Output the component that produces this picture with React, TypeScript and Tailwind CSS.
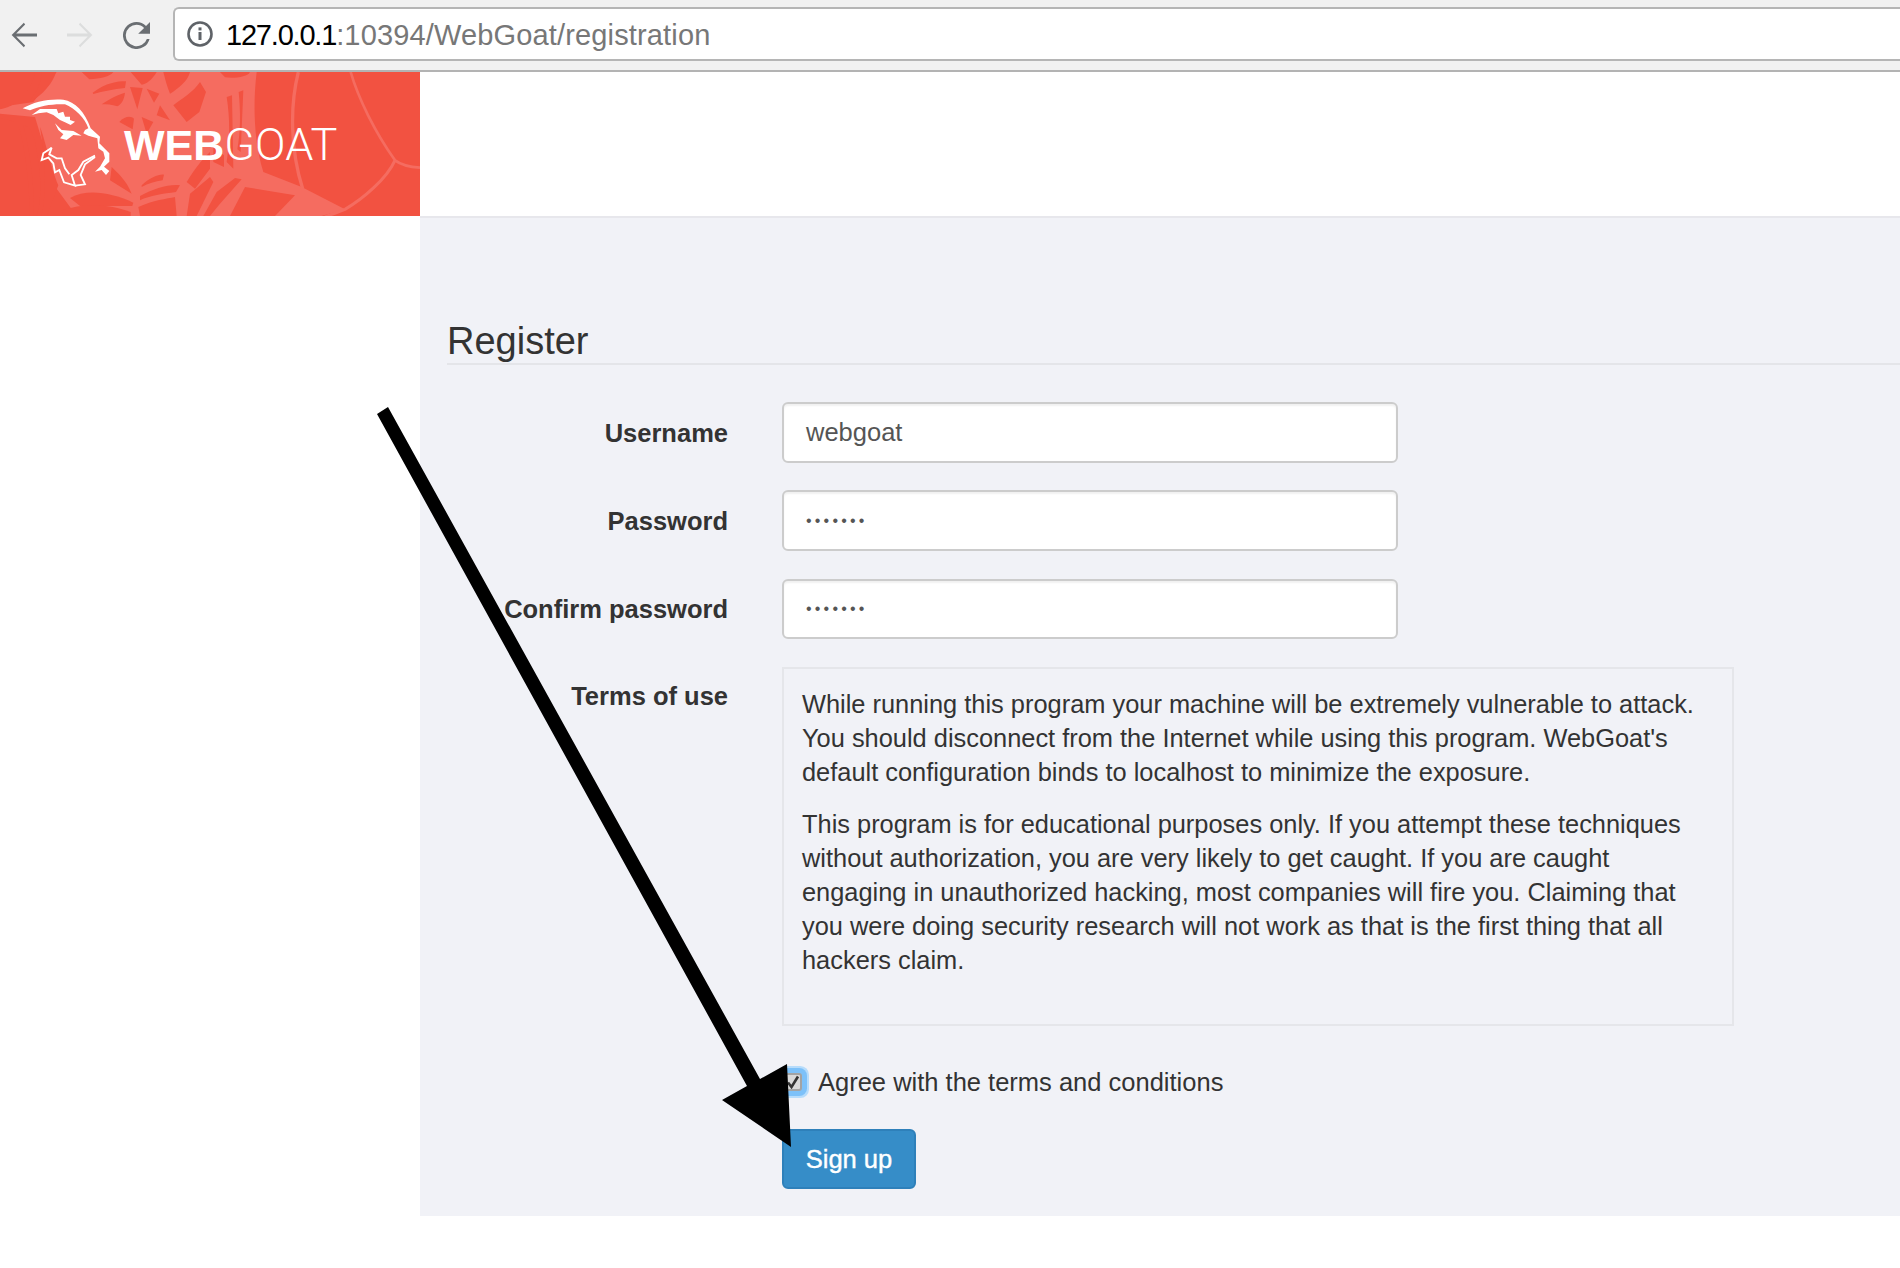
import React from "react";

function Back({ color }: { color: string }) {
  return (
    <svg width="26" height="26" viewBox="4 4 16 16" className="shrink-0" fill={color}>
      <path d="M20 11.1H7.2l5.5-5.6L11.9 4.4 4.4 12l7.5 7.6.8-1.1-5.5-5.6H20z" />
    </svg>
  );
}

function Forward({ color }: { color: string }) {
  return (
    <svg width="26" height="26" viewBox="4 4 16 16" className="shrink-0" fill={color}>
      <path d="M4 11.1h12.8l-5.5-5.6.8-1.1 7.5 7.6-7.5 7.6-.8-1.1 5.5-5.6H4z" />
    </svg>
  );
}

function Reload() {
  return (
    <svg width="27" height="27" viewBox="4 4 16 16" className="shrink-0" fill="#6a6e72">
      <path d="M17.65 6.35A7.95 7.95 0 0 0 12 4a8 8 0 1 0 7.73 10h-1.6A6.4 6.4 0 1 1 12 5.6c1.8 0 3.3.7 4.5 1.9L13 11h7V4l-2.35 2.35z" />
    </svg>
  );
}

function Info() {
  return (
    <svg width="26" height="26" viewBox="0 0 26 26" className="shrink-0" fill="none">
      <circle cx="13" cy="13" r="11.5" stroke="#5f6368" strokeWidth="2.6" />
      <rect x="11.5" y="11" width="3" height="8" fill="#5f6368" />
      <rect x="11.5" y="6.4" width="3" height="3" fill="#5f6368" />
    </svg>
  );
}

function Web() {
  const red = "#f25241";
  return (
    <svg width="420" height="144" viewBox="0 0 1260 432" className="absolute inset-0">
      <rect width="1260" height="432" fill={red} />
      <path fill="#f56c60" d="M170 0H770C758 100 762 210 790 300L905 345 1035 412 965 432H230L170 350 105 135 0 125V105L100 90Z" />
      <g fill={red}>
        <path d="M0 0H105C100 40 70 80 35 100 20 108 10 110 0 112Z" />
        <path d="M125 0H168C160 30 130 70 85 92 110 60 125 30 125 0Z" />
        <path d="M245 0H340C330 14 300 20 268 22Z" />
        <path d="M278 62C320 32 350 28 378 28L375 48C340 52 310 58 280 66Z" />
        <path d="M305 97C335 76 355 68 375 62 372 85 365 95 352 103 335 98 320 97 305 97Z" />
        <path d="M392 0H470C455 25 440 35 425 38Z" />
        <path d="M390 45L428 48 412 112Z" />
        <path d="M440 50L478 65 462 92Z" />
        <path d="M480 100L510 145 470 130Z" />
        <path d="M358 150C375 130 395 132 402 140L398 172Z" />
        <path d="M425 135L460 150 440 185Z" />
        <path d="M490 0H570C565 25 535 50 510 65 500 40 495 20 490 0Z" />
        <path d="M520 100C545 80 580 60 600 30L618 60 598 120 560 150Z" />
        <path d="M660 0H750C745 15 700 20 675 16Z" />
        <path d="M680 75L696 70 700 290 680 270C690 200 690 140 680 75Z" />
        <path d="M716 60L730 55 722 240 712 232C722 180 722 120 716 60Z" />
        <path d="M0 140C30 140 50 150 60 175 75 240 90 340 88 432H0Z" />
        <path d="M70 160C90 165 95 175 105 210 120 280 130 370 110 432H100C105 340 90 240 70 160Z" />
        <path d="M120 165C135 200 150 280 175 340L140 432H125C140 360 135 260 120 165Z" />
        <path d="M335 285C350 300 380 325 395 365L330 325Z" />
        <path d="M210 378C260 350 330 360 400 392L397 402H240Z" />
        <path d="M185 415C250 392 330 395 392 420V432H190Z" />
        <path d="M425 340C450 315 480 305 492 308L488 325C465 328 445 335 425 345Z" />
        <path d="M420 372C460 350 510 335 540 340L528 360C490 365 450 370 420 385Z" />
        <path d="M415 405C460 385 500 380 525 375L530 432H420Z" />
        <path d="M560 330C585 290 600 270 630 240V290L585 350Z" />
        <path d="M570 365L630 315 640 330 590 432H560Z" />
        <path d="M650 360L705 318 725 322 660 395 630 432H610Z" />
        <path d="M735 345L885 370 825 432H690Z" />
        <path d="M640 205L660 240 672 250 672 285 640 270Z" />
      </g>
      <g fill="none" stroke="#f56c60">
        <path d="M1052 0C1075 80 1125 180 1185 265 1205 280 1230 285 1260 287" strokeWidth="8" />
        <path d="M1185 265C1160 320 1090 380 1035 412 1000 425 980 432 965 440" strokeWidth="9" />
        <path d="M895 0C870 100 870 230 908 350" strokeWidth="10" />
      </g>
    </svg>
  );
}

function Goat() {
  return (
    <svg width="95" height="96" viewBox="0 3 285 288" className="shrink-0" fill="#ffffff">
      <path d="M8 40C40 20 90 10 130 14 165 20 195 50 212 100L240 125 238 145 268 175 268 200 252 215 268 228 258 240 245 225 225 230 240 215 255 190 250 170 235 160 232 130 205 122 190 115 195 105 205 100C195 70 165 40 135 28 100 26 60 32 30 46Z" />
      <path d="M35 60L60 42 90 42 110 42 115 55 130 50 135 65 150 65 150 75 165 80 152 90 135 82 120 75 100 60 80 52 55 55Z" />
      <path d="M105 85L125 105 160 108 185 122 160 120 140 135 120 130 130 118 115 105Z" />
      <g fill="none" stroke="#ffffff" strokeWidth="5.5" strokeLinejoin="miter">
        <path d="M95 158L70 175 65 195 85 188 100 205 105 232 118 225 132 262 165 272 155 240 175 225 190 200 225 182" />
        <path d="M95 158L88 178 110 190 125 190 135 220 148 238" />
        <path d="M225 186L195 208 182 240 195 268 165 272" />
      </g>
    </svg>
  );
}

function Arrow() {
  return (
    <svg width="1900" height="1268" viewBox="0 0 1900 1268" className="absolute left-0 top-0 pointer-events-none">
      <polygon fill="#000000" points="388,407 377,414 747,1086 722,1100 791,1147 787,1064 760,1079" />
    </svg>
  );
}

function Row({ label, children, top, align, labelPad }: { label: string; children: React.ReactNode; top: string; align?: string; labelPad?: string }) {
  return (
    <div className={`flex gap-[54px] ${top} ${align ?? "items-center"}`}>
      <div className={`w-[281px] shrink-0 text-right font-bold text-[#333333] text-[25.5px] leading-[34px] ${labelPad ?? ""}`}>{label}</div>
      {children}
    </div>
  );
}

function Field({ height, value, dots }: { height: string; value: string; dots?: boolean }) {
  return (
    <div className={`w-[616px] ${height} flex items-center rounded-[6px] border-2 border-[#cccccc] bg-white pl-[22px] shadow-[inset_0_2px_2px_rgba(0,0,0,0.06)] text-[#555555] ${dots ? "text-[16px] tracking-[3.2px]" : "text-[25.5px]"}`}>
      {value}
    </div>
  );
}

export default function App() {
  return (
    <div className="relative w-[1900px] h-[1268px] overflow-hidden bg-white font-['Liberation_Sans',Arial,sans-serif]">
      <div className="flex h-[72px] items-start border-b-2 border-[#b3b3b3] bg-[#f1f1f1]">
        <div className="flex h-[70px] items-center gap-[30px] pl-[11px]">
          <Back color="#6a6e72" />
          <Forward color="#dcdddd" />
          <Reload />
        </div>
        <div className="ml-[23px] mt-[7px] flex h-[54px] flex-1 items-center gap-[13px] rounded-l-[6px] border-y-2 border-l-2 border-[#b5b5b5] bg-white pl-[12px] text-[29px]">
          <Info />
          <div className="pt-[3px] tracking-[0.15px] text-[#777777]">
            <span className="tracking-[-1.2px] text-black">127.0.0.1</span>:10394/WebGoat/registration
          </div>
        </div>
      </div>

      <div className="flex h-[144px]">
        <div className="relative flex h-[144px] w-[420px] shrink-0 items-center overflow-hidden">
          <Web />
          <div className="relative flex items-center pl-[20px]">
            <Goat />
            <div className="ml-[9px] flex items-baseline leading-none text-white">
              <span className="text-[43px] font-bold">WEB</span>
              <span className="font-['Roboto',sans-serif] text-[45px] font-light">GOAT</span>
            </div>
          </div>
        </div>
      </div>

      <div className="flex h-[1000px]">
        <div className="w-[420px] shrink-0 bg-white" />
        <div className="flex-1 border-t-2 border-[#e7e7ec] bg-[#f1f2f7] pl-[27px] pt-[102px]">
          <div className="h-[45px] border-b-2 border-[#e4e5e9] text-[38px] leading-[42px] text-[#333333]">Register</div>

          <Row label="Username" top="mt-[37px]">
            <Field height="h-[61px]" value="webgoat" />
          </Row>
          <Row label="Password" top="mt-[27px]">
            <Field height="h-[61px]" value="•••••••" dots />
          </Row>
          <Row label="Confirm password" top="mt-[28px]">
            <Field height="h-[60px]" value="•••••••" dots />
          </Row>

          <Row label="Terms of use" top="mt-[28px]" align="items-start" labelPad="pt-[12px]">
            <div className="h-[359px] w-[952px] border-2 border-[#e5e6ea] px-[18px] pt-[18px] text-[25.4px] leading-[34px] text-[#333333]">
              <p>
                While running this program your machine will be extremely vulnerable to attack. You should disconnect
                from the Internet while using this program. WebGoat's default configuration binds to localhost to
                minimize the exposure.
              </p>
              <p className="mt-[18px]">
                This program is for educational purposes only. If you attempt these techniques without authorization,
                you are very likely to get caught. If you are caught engaging in unauthorized hacking, most companies
                will fire you. Claiming that you were doing security research will not work as that is the first thing
                that all hackers claim.
              </p>
            </div>
          </Row>

          <div className="ml-[335px] mt-[39px] flex h-[34px] items-center gap-[16px] text-[25.5px] leading-[34px] text-[#333333]">
            <span className="ml-[2px] flex h-[18px] w-[18px] items-center justify-center rounded-[3px] border-2 border-[#a3a3a3] bg-[#d9d9d9] shadow-[0_0_0_5px_#7dc1f9,0_0_0_7px_#b7dcfb]">
              <svg width="14" height="14" viewBox="0 0 14 14" fill="none">
                <path d="M2 7.5L5.5 12 12 1.5" stroke="#333333" strokeWidth="2.6" />
              </svg>
            </span>
            <span>Agree with the terms and conditions</span>
          </div>

          <button className="ml-[335px] mt-[30px] flex h-[60px] w-[134px] items-center justify-center rounded-[6px] border-2 border-[#2e80ba] bg-[#368dc8] text-[25.5px] text-white [-webkit-text-stroke:0.4px_white]">
            Sign up
          </button>
        </div>
      </div>

      <Arrow />
    </div>
  );
}
